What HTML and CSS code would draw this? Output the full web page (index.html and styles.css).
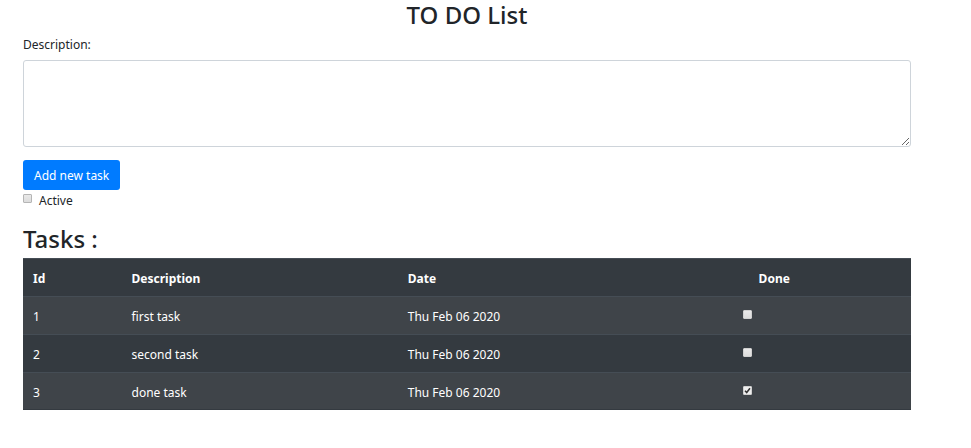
FILE: index.html
```html
<!DOCTYPE html>
<html lang="en">
<head>
<meta charset="utf-8">
<meta name="viewport" content="width=device-width, initial-scale=1">
<title>TO DO List</title>
<link rel="stylesheet" href="styles.css">
</head>
<body>
<main class="page">
  <h1 class="heading heading-center">TO DO List</h1>
  <form class="task-form">
    <label class="label" for="description">Description:</label>
    <textarea class="textarea" id="description"></textarea>
    <button class="button" type="button">Add new task</button>
    <div class="filter">
      <input class="check" type="checkbox" id="active">
      <label for="active">Active</label>
    </div>
  </form>
  <h2 class="heading">Tasks :</h2>
  <table class="tasks">
    <colgroup><col class="col-id"><col class="col-description"><col class="col-date"><col class="col-done"></colgroup>
    <thead>
      <tr><th>Id</th><th>Description</th><th>Date</th><th class="done-head">Done</th></tr>
    </thead>
    <tbody>
      <tr><td>1</td><td>first task</td><td>Thu Feb 06 2020</td><td class="done"><input class="check" type="checkbox" aria-label="first task done"></td></tr>
      <tr><td>2</td><td>second task</td><td>Thu Feb 06 2020</td><td class="done"><input class="check" type="checkbox" aria-label="second task done"></td></tr>
      <tr><td>3</td><td>done task</td><td>Thu Feb 06 2020</td><td class="done"><input class="check" type="checkbox" aria-label="done task done" checked></td></tr>
    </tbody>
  </table>
</main>
</body>
</html>
```

FILE: styles.css
```css
* { box-sizing: border-box; }

body {
  margin: 0;
  background: #fff;
  color: #212529;
  font: 12px/20px "Noto Sans", "Open Sans", sans-serif;
}

.page { padding: 0 60px 0 23px; }

.heading {
  margin: 0 0 4px;
  font-size: 24px;
  font-weight: 500;
  line-height: 30px;
}

.heading-center { text-align: center; }

.task-form {
  display: flex;
  flex-direction: column;
  align-items: flex-start;
  margin-bottom: 12px;
}

.label { margin: 1px 0 5px; }

.textarea {
  width: 100%;
  height: 87px;
  margin-bottom: 13px;
  padding: 5px 10px;
  border: 1px solid #ced4da;
  border-radius: 3px;
  background: #fff;
  color: #495057;
  font: inherit;
  resize: vertical;
}

.button {
  height: 30px;
  padding: 2px 11px 0;
  border: 0;
  border-radius: 3px;
  background: #007bff;
  color: #fff;
  font: inherit;
}

.filter {
  display: flex;
  align-items: flex-start;
  gap: 7px;
  line-height: 22px;
}

.filter .check { margin-top: 4px; }

.check {
  appearance: none;
  display: block;
  width: 9px;
  height: 9px;
  margin: 0;
  border: 1px solid #b5b5b5;
  border-radius: 1px;
  background: linear-gradient(#e9e9e9, #dcdcdc);
}

.check:checked {
  background: #eee url("data:image/svg+xml,%3Csvg xmlns='http://www.w3.org/2000/svg' viewBox='0 0 7 7'%3E%3Cpath d='M1 3.7L2.7 5.5L6 1.2' fill='none' stroke='%23333' stroke-width='1.5'/%3E%3C/svg%3E") center / 7px 7px no-repeat;
}

.tasks {
  width: 100%;
  table-layout: fixed;
  border-collapse: separate;
  border-spacing: 0;
  background: #343a40;
  color: #fff;
}

.col-id { width: 11.1%; }
.col-description { width: 31.1%; }
.col-date { width: 27%; }
.col-done { width: 30.8%; }

.tasks th,
.tasks td {
  height: 38px;
  padding: 2px 10px 0;
  border-top: 1px solid #454d55;
  text-align: left;
  vertical-align: middle;
}

.tasks th { font-weight: 700; }

.tasks tbody tr:nth-child(odd) { background: #3f4449; }

.tasks tbody tr:last-child td { box-shadow: inset 0 -1px #343a40; }

.tasks .done-head { text-align: center; }

.tasks .done {
  padding: 13px 64px 0 10px;
  vertical-align: top;
}

.done .check {
  margin: 0 auto;
  border-color: #d0d0d0;
}
```
